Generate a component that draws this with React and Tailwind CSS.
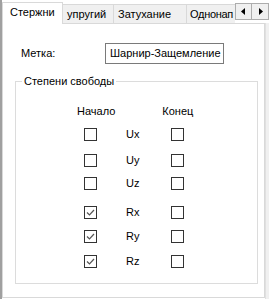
import React from 'react';

const rows = [
  { label: 'Ux', start: false, end: false, mt: 'mt-[10px]' },
  { label: 'Uy', start: false, end: false, mt: 'mt-[13px]' },
  { label: 'Uz', start: false, end: false, mt: 'mt-[10px]' },
  { label: 'Rx', start: true, end: false, mt: 'mt-[16px]' },
  { label: 'Ry', start: true, end: false, mt: 'mt-[11px]' },
  { label: 'Rz', start: true, end: false, mt: 'mt-[12px]' },
];

function Box({ checked }) {
  return (
    <div className="w-[13px] h-[13px] border border-[#333333] bg-white flex items-center justify-center">
      {checked && (
        <svg width="11" height="11" viewBox="0 0 11 11">
          <path d="M2 5.5 L4.5 8 L9 3" fill="none" stroke="#555555" strokeWidth="1.2" />
        </svg>
      )}
    </div>
  );
}

export default function App() {
  return (
    <div className="w-[269px] h-[299px] bg-white flex font-['Liberation_Sans',Arial,sans-serif] text-[11px] text-black overflow-hidden">
      <div className="w-[2px] h-full bg-[#a0a0a0]" />
      <div className="flex-1 flex flex-col">
        {/* --- PESTAÑAS --- */}
        <div className="relative h-[23px] flex items-end">
          <div className="relative z-10 -mb-px h-[22px] w-[61px] bg-white border border-b-0 border-[#d9d9d9] flex items-center pl-[7px] pb-[3px]">
            Стержни
          </div>
          <div className="h-[19px] w-[51px] bg-[#f0f0f0] border border-l-0 border-b-0 border-[#d9d9d9] flex items-center pl-[4px]">
            упругий
          </div>
          <div className="h-[19px] w-[73px] bg-[#f0f0f0] border border-l-0 border-b-0 border-[#d9d9d9] flex items-center pl-[4px]">
            Затухание
          </div>
          <div className="h-[19px] w-[48px] bg-[#f0f0f0] border-t border-[#d9d9d9] flex items-center pl-[3px] whitespace-nowrap tracking-[-0.3px]">
            Однонап
          </div>
          <div className="absolute right-0 top-[3px] flex">
            <div className="w-[17px] h-[17px] bg-[#f0f0f0] border border-[#adadad] flex items-center justify-center">
              <svg width="5" height="7" viewBox="0 0 5 7"><path d="M4 0 L0 3.5 L4 7 Z" fill="#000" /></svg>
            </div>
            <div className="w-[17px] h-[17px] bg-[#f0f0f0] border border-l-0 border-[#adadad] flex items-center justify-center">
              <svg width="5" height="7" viewBox="0 0 5 7"><path d="M1 0 L5 3.5 L1 7 Z" fill="#000" /></svg>
            </div>
          </div>
        </div>

        {/* --- PANEL --- */}
        <div className="flex-1 flex">
          <div className="w-[263px] h-[275px] border border-[#d9d9d9] bg-white flex flex-col px-[12px]">
            <div className="flex items-center mt-[19px]">
              <div className="w-[90px] pl-[6px]">Метка:</div>
              <div className="w-[119px] h-[21px] border border-[#7a7a7a] flex items-center pl-[4px]">
                Шарнир-Защемление
              </div>
            </div>

            <div className="relative mt-[17px] w-[243px] h-[203px] border border-[#dcdcdc]">
              <div className="absolute -top-[8px] left-[6px] bg-white px-[2px] leading-[14px]">
                Степени свободы
              </div>
              <div className="flex mt-[22px] leading-[14px]">
                <div className="ml-[61px]">Начало</div>
                <div className="ml-[47px]">Конец</div>
              </div>
              {rows.map((r) => (
                <div key={r.label} className={`flex items-center ${r.mt}`}>
                  <div className="ml-[68px]"><Box checked={r.start} /></div>
                  <div className="ml-[29px] w-[45px] leading-[13px]">{r.label}</div>
                  <div><Box checked={r.end} /></div>
                </div>
              ))}
            </div>
          </div>
          <div className="flex-1 bg-[#f0f0f0] border-l border-[#e0e0e0]" />
        </div>
      </div>
    </div>
  );
}
